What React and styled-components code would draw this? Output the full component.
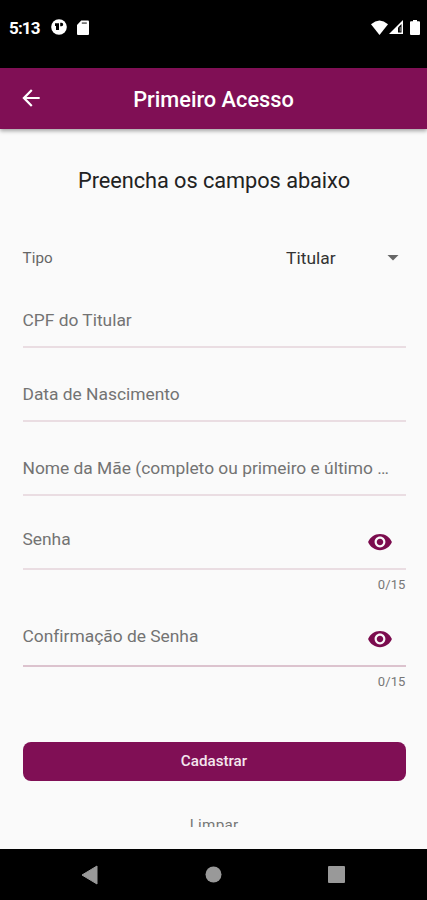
import React, {useState} from 'react'
import styled, {createGlobalStyle} from 'styled-components'

function PrimeiroAcesso() {
    const [values, setValues] = useState({})
    const [visible, setVisible] = useState({})

    const onChange = (e) => {
        setValues({...values, [e.target.name]: e.target.value})
    }

    const fields = [
        {name: 'cpf', label: 'CPF do Titular'},
        {name: 'nascimento', label: 'Data de Nascimento'},
        {name: 'mae', label: 'Nome da Mãe (completo ou primeiro e último nome)'},
    ]

    const passwords = [
        {name: 'senha', label: 'Senha'},
        {name: 'confirmacao', label: 'Confirmação de Senha', strong: true},
    ]

    return (
        <>
        <GlobalStyle/>
        <Screen>
            <StatusBar>
                <Clock>5:13</Clock>
                <StatusIcon width="16" height="16" $left="11px" viewBox="0 0 16 16">
                    <circle cx="8" cy="8" r="7.8" fill="#fff"/>
                    <path d="M4 4.200h4V11H5V7H4z" fill="#000"/>
                    <path d="M9.200 3.800h1.300a1.700 1.700 0 0 1 0 3.400H9.200z" fill="#000"/>
                </StatusIcon>
                <StatusIcon width="12" height="15" $left="10px" viewBox="0 0 12 15">
                    <path d="M4.2.4H11q1 0 1 1V14q0 1-1 1H1q-1 0-1-1V5z" fill="#fff"/>
                    <path d="M4.8 2.2h5V4h-5z" fill="#777"/>
                </StatusIcon>
                <Spacer/>
                <StatusIcon width="17" height="15" viewBox="0 0 17 15">
                    <path d="M0 4.2Q8.500-3 17 4.200L8.500 15z" fill="#fff"/>
                </StatusIcon>
                <StatusIcon width="14" height="14" $left="1px" viewBox="0 0 14 14">
                    <path d="M14 0v14H0z" fill="#fff"/>
                    <path d="M12.500 4v8.500H9V7.500z" fill="#000"/>
                    <path d="M10.700 7h1v4.500h-1z" fill="#888"/>
                </StatusIcon>
                <StatusIcon width="10" height="15" $left="7px" viewBox="0 0 10 15">
                    <path d="M3 0h4v1.300h2q1 0 1 1V14q0 1-1 1H1q-1 0-1-1V2.300q0-1 1-1h2z" fill="#fff"/>
                </StatusIcon>
            </StatusBar>

            <AppBar>
                <BackButton aria-label="Voltar">
                    <svg width="26" height="26" viewBox="0 0 24 24">
                        <path d="M20 11H7.830l5.590-5.590L12 4l-8 8 8 8 1.410-1.410L7.830 13H20v-2z" fill="#fff"/>
                    </svg>
                </BackButton>
                <Title>Primeiro Acesso</Title>
            </AppBar>

            <Content>
                <Heading>Preencha os campos abaixo</Heading>
                <TypeRow>
                    <TypeLabel>Tipo</TypeLabel>
                    <Dropdown>
                        Titular
                        <svg width="12" height="6" viewBox="0 0 12 6">
                            <path d="M.5 0h11L6 5.500z" fill="#666"/>
                        </svg>
                    </Dropdown>
                </TypeRow>

                {fields.map(field => (
                    <Field key={field.name}>
                        <Input name={field.name} placeholder={field.label} value={values[field.name] || ''} onChange={onChange} />
                    </Field>
                ))}

                {passwords.map(field => (
                    <PasswordBlock key={field.name}>
                        <PasswordField $strong={field.strong}>
                            <Input
                                type={visible[field.name] ? 'text' : 'password'}
                                name={field.name}
                                placeholder={field.label}
                                maxLength={15}
                                value={values[field.name] || ''}
                                onChange={onChange}
                            />
                            <EyeButton aria-label="Mostrar" onClick={() => setVisible({...visible, [field.name]: !visible[field.name]})}>
                                <svg width="26" height="26" viewBox="0 0 24 24">
                                    <path d="M12 4.500C7 4.500 2.730 7.610 1 12c1.730 4.390 6 7.500 11 7.500s9.270-3.110 11-7.500c-1.730-4.390-6-7.500-11-7.500zM12 17c-2.760 0-5-2.240-5-5s2.240-5 5-5 5 2.240 5 5-2.240 5-5 5zm0-8c-1.660 0-3 1.340-3 3s1.340 3 3 3 3-1.340 3-3-1.340-3-3-3z" fill="#7b0c4e"/>
                                </svg>
                            </EyeButton>
                        </PasswordField>
                        <Counter>{(values[field.name] || '').length}/15</Counter>
                    </PasswordBlock>
                ))}

                <SubmitButton>Cadastrar</SubmitButton>
                <ClearButton>Limpar</ClearButton>
            </Content>

            <NavBar>
                <svg width="17" height="20" viewBox="0 0 17 20">
                    <path d="M16 1v18L1 10z" fill="#999" stroke="#999" strokeLinejoin="round"/>
                </svg>
                <svg width="17" height="17" viewBox="0 0 17 17">
                    <circle cx="8.500" cy="8.500" r="8" fill="#999"/>
                </svg>
                <svg width="17" height="17" viewBox="0 0 17 17">
                    <rect width="17" height="17" rx="1" fill="#999"/>
                </svg>
            </NavBar>
        </Screen>
        </>
    )
};

const GlobalStyle = createGlobalStyle`
    * {
        box-sizing: border-box;
    }
    body {
        margin: 0;
        background-color: #000;
        font-family: Roboto, sans-serif;
    }
    svg {
        display: block;
        flex-shrink: 0;
    }
    button, input {
        font-family: inherit;
        border: 0;
        padding: 0;
        background: none;
        outline: none;
    }
`;

const Screen = styled.div`
    display: flex;
    flex-direction: column;
    width: 427px;
    height: 900px;
    overflow: hidden;
    background-color: #fafafa;
`;

const StatusBar = styled.div`
    display: flex;
    align-items: center;
    height: 67.500px;
    padding: 0 7px 13px 9px;
    background-color: #000;
`;

const Clock = styled.span`
    width: 31px;
    padding-top: 1px;
    font-size: 17px;
    font-weight: 700;
    letter-spacing: -0.850px;
    white-space: nowrap;
    color: #fff;
`;

const StatusIcon = styled.svg`
    margin-left: ${props => props.$left || 0};
`;

const Spacer = styled.div`
    flex: 1;
`;

const AppBar = styled.div`
    display: grid;
    grid-template-columns: 62px 1fr 62px;
    align-items: center;
    height: 61px;
    background-color: #800f55;
    box-shadow: 0 2px 4px rgba(0, 0, 0, 0.35);
    z-index: 1;
`;

const BackButton = styled.button`
    padding-left: 18px;
`;

const Title = styled.h1`
    margin: 0;
    padding-top: 3px;
    font-size: 21.750px;
    font-weight: 500;
    text-align: center;
    white-space: nowrap;
    color: #fff;
`;

const Content = styled.div`
    display: flex;
    flex-direction: column;
    height: 698.500px;
    padding: 0 21.500px 0 22.500px;
    overflow: hidden;
`;

const Heading = styled.h2`
    flex-shrink: 0;
    height: 28px;
    margin: 38.500px 0 0;
    font-size: 21.750px;
    line-height: 28px;
    font-weight: 400;
    letter-spacing: -0.050px;
    text-align: center;
    color: #222;
`;

const TypeRow = styled.div`
    display: flex;
    flex-shrink: 0;
    align-items: center;
    justify-content: space-between;
    height: 32px;
    margin-top: 47px;
`;

const TypeLabel = styled.span`
    font-size: 15.200px;
    letter-spacing: 0.100px;
    color: #666;
`;

const Dropdown = styled.button`
    display: flex;
    align-items: center;
    justify-content: space-between;
    width: 119.500px;
    padding-right: 7px;
    font-size: 17.400px;
    letter-spacing: 0.050px;
    color: #333;
`;

const Field = styled.div`
    display: flex;
    flex-shrink: 0;
    align-items: flex-end;
    height: 74px;
    padding: 0 12px 14px 0;
    border-bottom: 2px solid #eadde2;
`;

const Input = styled.input`
    flex: 1;
    min-width: 0;
    height: 24px;
    font-size: 17.400px;
    letter-spacing: -0.010px;
    text-overflow: ellipsis;
    color: #333;

    &::placeholder {
        color: #737373;
        opacity: 1;
    }
`;

const PasswordBlock = styled.div`
    flex-shrink: 0;
    height: 97px;
`;

const PasswordField = styled.div`
    display: flex;
    align-items: flex-end;
    height: 74px;
    padding-bottom: 17px;
    border-bottom: 2px solid ${props => props.$strong ? '#dcc3ce' : '#eadde2'};
`;

const EyeButton = styled.button`
    height: 26px;
    margin: 0 13px -4px 12px;
`;

const Counter = styled.div`
    padding-top: 7px;
    font-size: 13px;
    line-height: 16px;
    letter-spacing: 0.100px;
    text-align: right;
    color: #777;
`;

const SubmitButton = styled.button`
    flex-shrink: 0;
    height: 38.500px;
    margin-top: 52px;
    border-radius: 8px;
    background-color: #800f55;
    font-size: 15.200px;
    font-weight: 500;
    color: #f4e6ee;
`;

const ClearButton = styled.button`
    flex-shrink: 0;
    align-self: center;
    height: 20px;
    margin-top: 34px;
    font-size: 15.200px;
    line-height: 20px;
    letter-spacing: 0.270px;
    color: #777;
`;

const NavBar = styled.div`
    display: flex;
    align-items: center;
    justify-content: space-between;
    height: 51px;
    margin-top: auto;
    padding: 0 82px 0 81px;
    background-color: #000;
`;

export default PrimeiroAcesso
